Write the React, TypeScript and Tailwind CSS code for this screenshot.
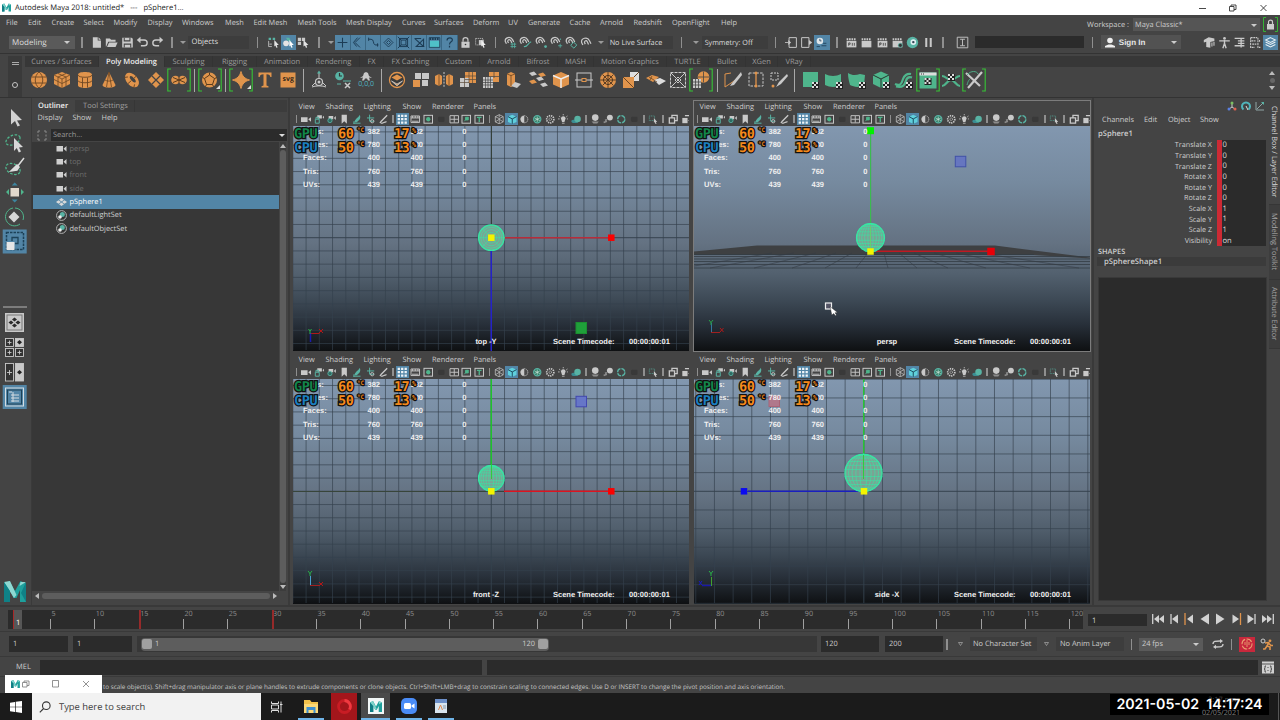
import type { ReactNode } from "react";

const O = "#e0944c";
const G = "#4fb58c";
const W = "#c9c9c9";
const T = "#58b3a4";

const MENUS: [string, string][] = [
  ["File", "w-[22px]"], ["Edit", "w-[23.5px]"], ["Create", "w-[32px]"], ["Select", "w-[30px]"],
  ["Modify", "w-[34px]"], ["Display", "w-[34.5px]"], ["Windows", "w-[43px]"], ["Mesh", "w-[28.5px]"],
  ["Edit Mesh", "w-[44px]"], ["Mesh Tools", "w-[48.5px]"], ["Mesh Display", "w-[56px]"], ["Curves", "w-[32px]"],
  ["Surfaces", "w-[39px]"], ["Deform", "w-[35px]"], ["UV", "w-[20px]"], ["Generate", "w-[41.5px]"],
  ["Cache", "w-[30.5px]"], ["Arnold", "w-[33.5px]"], ["Redshift", "w-[38.5px]"], ["OpenFlight", "w-[49px]"], ["Help", "w-[20px]"],
];

const TABS: [string, string][] = [
  ["Curves / Surfaces", "w-[74px]"], ["Poly Modeling", "w-[66px]"], ["Sculpting", "w-[48px]"], ["Rigging", "w-[44px]"],
  ["Animation", "w-[51px]"], ["Rendering", "w-[52px]"], ["FX", "w-[24px]"], ["FX Caching", "w-[54px]"],
  ["Custom", "w-[42px]"], ["Arnold", "w-[39px]"], ["Bifrost", "w-[39px]"], ["MASH", "w-[36px]"],
  ["Motion Graphics", "w-[73px]"], ["TURTLE", "w-[42px]"], ["Bullet", "w-[37px]"], ["XGen", "w-[32px]"], ["VRay", "w-[33px]"],
];

const checker = (x: number, y: number) => (
  <g>
    <rect x={x} y={y} width="7" height="7" fill="#222" />
    <path d={`M${x} ${y}h2v2h-2zM${x + 4} ${y}h2v2h-2zM${x + 2} ${y + 2}h2v2h-2zM${x} ${y + 4}h2v2h-2zM${x + 4} ${y + 4}h2v2h-2z`} fill="#ddd" />
  </g>
);

// shelf glyphs, 24 x 24
const SHELF: Record<string, ReactNode> = {
  sphere: <><circle cx="12" cy="12" r="8" fill={O} /><path d="M4.500 9h15M4.500 15h15M12 4c-5 4-5 12 0 16M12 4c5 4 5 12 0 16" stroke="#6b4522" fill="none" strokeWidth=".9" /></>,
  cube: <><path d="M12 4l8 3v9l-8 4-8-4V7z" fill={O} /><path d="M4 7l8 4 8-4M12 11v9M4 11.500l8 4 8-4M8 9v9M16 9v9M8 5.500l8 3.500M16 5.500L8 9" stroke="#6b4522" fill="none" strokeWidth=".8" /></>,
  cyl: <><path d="M5 6.500c0-3.300 14-3.300 14 0v11c0 3.300-14 3.300-14 0z" fill={O} /><path d="M5 7c0 3 14 3 14 0M5 12.500c0 3 14 3 14 0M9.500 9.500v10M14.500 9.500v10" stroke="#6b4522" fill="none" strokeWidth=".9" /></>,
  cone: <><path d="M12 4l6.500 13c0 3.500-13 3.500-13 0z" fill={O} /><path d="M12 4l-2.500 15M12 4l2.500 15M8 12c2 1.500 6 1.500 8 0" stroke="#6b4522" fill="none" strokeWidth=".8" /></>,
  torus: <g transform="rotate(48 12 12)"><ellipse cx="12" cy="12" rx="8.500" ry="5.500" fill={O} /><ellipse cx="12" cy="11" rx="4" ry="1.700" fill="#444" /><path d="M12 13v4.500M7 13l-2 3M17 13l2 3M12 6.500v3" stroke="#6b4522" strokeWidth=".9" /></g>,
  plane: <><path d="M12 4l8 8-8 8-8-8z" fill={O} /><path d="M8 8l8 8M16 8l-8 8" stroke="#444" strokeWidth="1.200" /></>,
  soccer: <><circle cx="8.500" cy="12" r="4.300" fill={O} /><circle cx="15.500" cy="12" r="4.300" fill={O} /><path d="M6 9.500l12 5M6 14.500l12-5M12 9v6" stroke="#5a3a1c" strokeWidth="1" /></>,
  disc: <><circle cx="11.500" cy="12" r="7.500" fill={O} /><path d="M11.500 7l5 3.500-2 6h-6l-2-6zM11.500 4.500V7M16.500 10.500l2.500-1M14.500 16.500l1 2M8.500 16.500l-1 2M6.500 10.500l-2-1" stroke="#5a3a1c" fill="none" strokeWidth="1" /><path d="M22 17v4h-4z" fill="#ddd" /></>,
  star: <><path d="M12 3.500c1.500 5 3.500 7 8.500 8.500-5 1.500-7 3.500-8.500 8.500-1.500-5-3.500-7-8.500-8.500 5-1.500 7-3.500 8.500-8.500z" fill={O} stroke={O} /><path d="M22 17v4h-4z" fill="#ddd" /></>,
  type: <path d="M5.500 4.500h13V9h-1.200c-.3-2-1-2.800-3.800-2.800V17.500l2 .8V19.500h-7v-1.200l2-.8V6.200C7.700 6.200 7 7 6.700 9H5.500z" fill={O} />,
  svg: <rect x="4.500" y="4.500" width="15" height="15" fill={O} />,
  joint: <><circle cx="12" cy="14" r="3.500" fill="none" stroke={W} strokeWidth="1.200" /><circle cx="12" cy="14" r="1.500" fill={W} /><path d="M5 19c3-1.500 11-1.500 14 0M12 5v5M5 18l3-3M19 18l-3-3" stroke={W} fill="none" /><path d="M12 2.500l2 3h-4z" fill={T} /></>,
  clock: <><circle cx="8.500" cy="8" r="4.300" fill={T} /><path d="M8.500 5v3h2.500" stroke="#333" fill="none" strokeWidth="1.200" /><path d="M6 16h4M12 13h8" stroke={T} /><path d="M14 15l5 5M19 15l-5 5" stroke={W} strokeWidth="1.500" /></>,
  zero: <><path d="M6 10l3-2 1-3 2-1 2 1 1 3 3 2-3-.5 1 3h-2l-1-2h-2l-1 2H8l1-3z" fill={W} /></>,
  combine: <><circle cx="12" cy="12" r="7.500" fill="#3a3a3a" stroke={O} strokeWidth="1.300" /><path d="M12 6.500l5.500 3-5.500 3-5.500-3z" fill={O} /><path d="M6.500 13l5.500 3 5.500-3-5.500 4.800z" fill={O} stroke={W} strokeWidth=".8" /></>,
  separate: <><path d="M4 12h7v7H4z" fill={O} /><path d="M6 5h6v6H6zM13 5h7v6h-7zM13 12h6v6h-6z" fill={W} /></>,
  mirror: <><path d="M3 8l4-2 3 2v8l-3 2-4-2zM14 8l3-2 4 2v8l-4 2-3-2z" fill={O} /><path d="M12 4v16" stroke={W} strokeDasharray="2 1.200" /><path d="M7 6v12M17 6v12" stroke="#6b4522" strokeWidth=".8" /></>,
  smooth: <><path d="M9 4h11v11H9z" fill={O} /><path d="M4 10h9v9H4z" fill={W} /><path d="M13 4v11M16.500 4v11M9 8h11M9 11.500h11M8.500 10v9M4 14.500h9" stroke="#5a4a3a" strokeWidth=".7" /></>,
  reduce: <><path d="M10 4h10v10H10z" fill={O} /><path d="M4 9h10v11H4z" fill={W} /><path d="M15 4v6M10 8.500h10M6.500 9v11M9 9v11M11.500 9v11M4 12h10M4 14.500h10M4 17h10" stroke="#444" strokeWidth=".7" /></>,
  extrude: <><path d="M5 6l4-2 4 2v11l-4 2-4-2z" fill={O} /><path d="M13 14l6 2-4 4-6-2z" fill={W} /><path d="M9 7v11M5 6l4 1.500L13 6" stroke="#6b4522" fill="none" strokeWidth=".8" /></>,
  bridge: <><path d="M3 5l5-1.500 3 3L6 8zM10 10l5-1.500 3 3-5 1.500zM14 16l5-1.500 3 3-5 1.500z" fill={W} /><path d="M12 6l5-1.500 3 3L15 9zM3 13l5-1.500 3 3L6 16z" fill={O} /></>,
  bevel: <><path d="M12 4l8 3.500v9L12 20l-8-3.500v-9z" fill={O} /><path d="M4 7.500l8 3.500 8-3.500M12 11v9" stroke="#eee" fill="none" strokeWidth="1.500" /></>,
  connect: <><rect x="5" y="5" width="14" height="14" fill="none" stroke={W} /><path d="M3 12h18" stroke={W} /><rect x="10" y="10.500" width="4" height="3" fill="#444" stroke={O} /></>,
  wheel: <><circle cx="12" cy="12" r="8" fill={O} /><circle cx="12" cy="12" r="4.500" fill="none" stroke="#4d3520" /><path d="M12 4v16M4 12h16M6.500 6.500l11 11M17.500 6.500l-11 11" stroke="#4d3520" strokeWidth=".9" /></>,
  fill: <><path d="M11 4h9v9h-9z" fill="#dedede" /><path d="M4 9h11v11H4z" fill={O} /><path d="M4 9l11 11M15 9l5-5" stroke="#6b4522" /></>,
  weld: <><path d="M3 10l6-3 7 2-6 5z" fill={O} /><path d="M11 12l6-2 6 3-7 4z" fill="#ddd" /><path d="M6 9l8 5M9 8l-2 4" stroke="#6b4522" strokeWidth=".8" /></>,
  quad: <><rect x="4.500" y="4.500" width="15" height="15" fill="none" stroke={W} strokeDasharray="3 1" /><path d="M5 5l14 14M19 5L5 19M12 9l3 3-3 3-3-3z" stroke={W} fill="none" /></>,
  ball: <><circle cx="14.500" cy="9" r="5.800" fill={O} /><path d="M4 11h8v9H4z" fill={W} /><path d="M6.500 11v9M9.500 11v9M4 14h8M4 17h8M9 9h11M14.500 3.500v11" stroke="#444" strokeWidth=".8" /></>,
  knife: <><path d="M4 6l6-1M4 6v13l12-8" stroke={O} fill="none" /><path d="M20 4l-9 11-2 3 4-1 8-10z" fill={W} /></>,
  loop: <><rect x="5" y="5" width="14" height="13" fill="none" stroke={W} strokeDasharray="2.500 1.200" /><path d="M12 4v15" stroke={O} strokeWidth="1.300" /><circle cx="12" cy="5" r="1.500" fill={O} /><circle cx="12" cy="18" r="1.500" fill={O} /></>,
  draw: <><rect x="4" y="5" width="7" height="7" fill="none" stroke={W} strokeDasharray="2 1" /><path d="M20 6l-8 8-3 5 5-3 7-8z" fill={W} /><circle cx="6" cy="18" r="1.500" fill={O} /></>,
  uvPlane: <><path d="M4 4h15v15H4z" fill={G} />{checker(13, 14)}</>,
  uvCyl: <><path d="M3 6c5 2.500 11 2.500 16 0v11c-5 2.500-11 2.500-16 0z" fill={G} />{checker(14, 14)}</>,
  uvShape: <><path d="M3 5c5 3 8 2 12 1l5 1-1 10c-5 3-10 2-14 0C4 13 3 10 3 5z" fill={G} />{checker(14, 14)}</>,
  uvCube: <><path d="M12 3.500l8 3.500v9L12 20l-8-4V7z" fill={G} /><path d="M4 7l8 4 8-4M12 11v9" stroke="#28352f" fill="none" />{checker(14, 14)}</>,
  uvCont: <><path d="M3 16c6 3 7-2 8-5s4-6 8-5M4 18.500c8 2 9-3 10-6s3-4 6-3" stroke={G} fill="none" strokeWidth="2.200" />{checker(14, 14)}</>,
  uvEd: <><rect x="3.500" y="4.500" width="17" height="16" fill={G} /><rect x="3.500" y="4.500" width="17" height="3" fill="#ddd" /><path d="M5 6h4" stroke="#333" strokeDasharray="1 1" />{checker(8.500, 10)}</>,
  uvX: <><path d="M3 8c4 0 5 4 9 4s5-4 9-4M3 18c4 0 5-6 9-6s5 6 9 6" stroke={G} fill="none" strokeWidth="2.200" />{checker(9, 6)}</>,
  uvCut: <><path d="M4 5l14 13M20 4L6 20" stroke={W} strokeWidth="2.200" /><path d="M5 7c4-5 10-4 11-1M5 17c1-4 2-5 3-6" fill="none" stroke={G} strokeWidth=".9" /></>,
};

const SHELF_ROW = [
  "sphere", "cube", "cyl", "cone", "torus", "plane", "[soccer", "|", "[disc", "|", "[star", "type", "svg", "|", "joint", "clock", "zero", "|",
  "combine", "separate", "mirror", "smooth", "reduce", "extrude", "bridge", "bevel", "connect", "wheel", "fill", "weld", "quad", "[ball", "|",
  "knife", "loop", "draw", "|", "uvPlane", "uvCyl", "uvShape", "uvCube", "uvCont", "[uvEd", "uvX", "[uvCut",
];

function ShelfIcon({ id }: { id: string }) {
  if (id === "|") return <div className="flex w-[7.8px] justify-center"><div className="h-[23px] w-px bg-[#a9a9a9]" /></div>;
  const boxed = id[0] === "[";
  const key = boxed ? id.slice(1) : id;
  return (
    <div className="relative flex w-[23.4px] justify-center">
      <svg className="h-6 w-6 shrink-0 overflow-visible" viewBox="0 0 24 24">
        {SHELF[key]}
        {boxed && <path d="M4 1H.8v22H4M20 1h3.200v22H20" stroke="#35c435" fill="none" strokeWidth="1.100" />}
      </svg>
      {key === "svg" && <span className="absolute top-[7px] text-[7px] font-bold leading-[9px] text-[#3a2a1a]">svg</span>}
      {key === "zero" && <span className="absolute top-[12px] text-[7px] leading-[9px] text-[#4fb5c4]">0,0,0</span>}
    </div>
  );
}

// small glyphs, 16 x 16
const clap = <><path d="M2 6h12v8H2z" fill={W} /><path d="M2 4h12" stroke={W} strokeWidth="2.200" strokeDasharray="2 1" /></>;
const magnet = <path d="M3 9.500L1.500 6.500c-.5-5 6.500-6.500 9-2l1.500 3M5.500 8.500L4.500 6.500c.5-2.500 2.500-3 4-.5l1 2.500" stroke={W} fill="none" strokeWidth="1.500" />;
const SMALL: Record<string, ReactNode> = {
  file: <><path d="M3.500 1.500h6v4h4v9h-10z" fill={W} /><path d="M10.500 1.500l3 3h-3z" fill={W} /></>,
  open: <><path d="M1 3h5l1.500 1.500H13V7H4l-2.500 6H1z" fill={W} /><path d="M5 8h10.500l-2.500 5.500H2.500z" fill={W} /></>,
  save: <><path d="M1.500 2h11.500l1.500 1.500V14h-13z" fill={W} /><path d="M4 2v4h7V2M4 14v-4h8v4" stroke="#444" fill="none" strokeWidth="1.300" /></>,
  undo: <><path d="M4 5h6c5 0 5 7 0 7H6" stroke={W} fill="none" strokeWidth="1.700" /><path d="M5.500 1v8L1 5z" fill={W} /></>,
  redo: <><path d="M12 5H6c-5 0-5 7 0 7h4" stroke={W} fill="none" strokeWidth="1.700" /><path d="M10.500 1v8L15 5z" fill={W} /></>,
  sel1: <><path d="M2 2h3v3H2zM7 2h3v3H7z" fill={T} /><path d="M2 6v7h4M3 10h3" stroke={W} fill="none" /><path d="M9 5l5.500 6H12l1 3-1.500.6-1.200-3L9 13z" fill="#e4e4e4" /></>,
  sel2: <><circle cx="5" cy="9" r="3.500" fill="#e4e4e4" /><path d="M5 2h4l2 4H7z" fill={T} /><path d="M9 5l5.500 6H12l1 3-1.500.6-1.200-3L9 13z" fill="#fff" /></>,
  sel3: <><path d="M1 2h4v4H1zM6 2h4v4H6zM1 7h4v4H1z" fill={W} /><path d="M8 5l6 6h-2.500l1 3-1.500.6-1.200-3L8 13z" fill="#e4e4e4" /></>,
  plus: <path d="M8 2v12M2 8h12" stroke="#1c3c55" strokeWidth="1.300" />,
  ang: <path d="M11 2L5 8l6 6M8 2L3 8l4 5" stroke="#1c3c55" fill="none" strokeWidth="1.200" />,
  curve: <path d="M2 4h3c4 0 2 6 5 7h4M2 2v4M13 9v4" stroke="#1c3c55" fill="none" strokeWidth="1.200" />,
  dia: <path d="M8 2.500L13.500 8 8 13.500 2.500 8zM8 5.500L10.500 8 8 10.500 5.500 8z" stroke="#1c3c55" fill="none" strokeWidth="1.100" />,
  lat: <path d="M3 3h10v10H3zM5 5h6v6H5zM1 1l4 4M15 1l-4 4M1 15l4-4M15 15l-4-4" stroke="#1c3c55" fill="none" strokeWidth="1.200" />,
  spi: <path d="M2 3h8M2 3l11 10H4l9-9v9" stroke="#1c3c55" fill="none" strokeWidth="1.300" />,
  film: <><path d="M2 6h12v8H2z" fill="#4fc0c8" /><path d="M2 3.500h12" stroke="#1c3c55" strokeWidth="3" strokeDasharray="2 1" /><path d="M1.500 2h13v12h-13z" stroke="#1c3c55" fill="none" /></>,
  q: <path d="M5 5.500c0-4 7-4 6.500-.5C11.500 7.500 8 7 8 10.500M8 12v2" stroke="#1c3c55" fill="none" strokeWidth="1.500" />,
  lock: <><path d="M3 7h10v7.500H3z" fill={W} /><path d="M5 7V4.500c0-3.500 6-3.500 6 0V7" stroke={W} fill="none" strokeWidth="1.500" /><circle cx="8" cy="10.500" r="1" fill="#333" /></>,
  selp: <><rect x="2" y="3" width="9" height="8" fill="none" stroke={W} strokeDasharray="1.500 1" /><path d="M6 5h6v6H6z" fill={W} /><path d="M9 5l5.500 6H12l1 3-1.500.6-1.200-3L9 13z" fill="#eee" /></>,
  mag1: <>{magnet}<path d="M8 10h7M8 13h7M10 8v7M13 8v7" stroke={T} /></>,
  mag2: <>{magnet}<path d="M6 13c5 1 4-4 9-6" stroke={T} fill="none" strokeWidth="1.300" /></>,
  mag3: <>{magnet}<circle cx="13" cy="13" r="1.700" fill={T} /></>,
  mag4: <>{magnet}<path d="M10 12h5M12.500 9.500v5M13 3v2" stroke={T} /></>,
  mag5: <>{magnet}<path d="M10.500 7.500l4 3.500-3.500 4-4-3.500z" stroke={T} fill="none" strokeWidth="1.200" /></>,
  mag6: <path d="M3.500 11L2 8c-1-5 7-8 9.500-2.500l2 4M6.500 10L5.500 8c0-2.500 2.500-3 3.500-1l1.500 3.500" stroke={W} fill="none" strokeWidth="1.500" />,
  in: <><path d="M5 2h9v12H5z" stroke={W} fill="none" strokeWidth="1.200" /><path d="M0 8h4" stroke={W} /><path d="M4 5l3.500 3L4 11z" fill={W} /></>,
  out: <><path d="M2 2h9v12H2z" stroke={W} fill="none" strokeWidth="1.200" /><path d="M11 5l4 3-4 3z" fill={W} /></>,
  hist: <><circle cx="6" cy="6" r="4" fill="#dfe6ea" /><path d="M6 3.500V6h2M8 12h6M10 9h4M2 13h4" stroke="#1c3c55" fill="none" /></>,
  clap: clap,
  clapr: <>{clap}<path d="M4.500 12V8.500h1.800v1.700H4.500M9 8.500v3.500M11.500 8.500v3.500" stroke="#444" fill="none" /></>,
  clapg: <>{clap}<circle cx="11.500" cy="11.500" r="2.500" fill="#333" stroke={T} /></>,
  orb: <><circle cx="8" cy="8" r="7" fill={T} /><circle cx="9" cy="7.500" r="3.500" fill="#dfeef0" /><circle cx="9" cy="7.500" r="1.500" fill="#345" /></>,
  pause: <path d="M4 2.500h2.500v11H4zM9.500 2.500H12v11H9.500z" fill={W} />,
  ibeam: <path d="M1.500 1.500h13v13h-13zM5 4h6M8 4v8M5 12h6" stroke={W} fill="none" strokeWidth="1.100" />,
  mt1: <><path d="M1 5l6-3.500 7 1.500v3l-5 1.500v7l-5-1V7L1 8z" fill={W} /><path d="M11 8v5M13.500 7v5" stroke={W} strokeWidth="1.300" /></>,
  man: <><circle cx="8" cy="3" r="1.700" fill={W} /><path d="M1.500 6h13M8 5v5M8 9l-2 6M8 9l2 6" stroke={W} strokeWidth="1.700" /></>,
  ae: <path d="M2 3h12M6 6h8M6 9h8M2 12h12M10 2v12" stroke={W} strokeWidth="1.600" />,
  ts: <path d="M2 2h8M2 2v12h5M11 2v12h3M3 6h5M4 10h5M13 5v2" stroke={W} fill="none" strokeWidth="1.300" strokeDasharray="2.500 .8" />,
  layers: <path d="M8 2l6 3-6 3-6-3zM2 7.500l6 3 6-3M2 10.500l6 3 6-3" stroke="#e8f0f4" fill="none" strokeWidth="1.300" />,
  // viewport toolbar
  cam: <path d="M0 5h10v7H0zM11 8l5-3.500v8z" fill={W} />,
  cam2: <><path d="M5 2h7v5H5zM13 5l3-3v6z" fill={W} /><path d="M2 8h6v6H2zM3 8V5h4v3" stroke={T} fill="none" strokeWidth="1.500" /></>,
  cam3: <><path d="M4 3h7v5H4zM12 6l3-3v6z" fill={W} /><circle cx="6" cy="10" r="3.200" fill="#2e6b62" stroke={T} strokeWidth="1.300" /></>,
  book: <path d="M4 1h8v14l-4-4-4 4z" fill={W} />,
  feather: <><path d="M12 1c2 6-1 9-6 12l-2-1c0-4 5-6 8-11z" fill={T} /><path d="M2 14h11M3 11v4" stroke={T} strokeWidth="1.500" /></>,
  pan: <><path d="M7 1v10M3 6h11M7 11h7" stroke={T} strokeWidth="1.500" /><circle cx="11" cy="11" r="2.500" fill="none" stroke={W} strokeWidth="1.300" /></>,
  pen: <path d="M14 2L5 11l-2 3M5 14c3 1 5-3 8-2" stroke={W} fill="none" strokeWidth="2" />,
  grid: <path d="M1 1h3.500v3.500H1zM6.200 1h3.500v3.500H6.200zM11.500 1H15v3.500h-3.500zM1 6.200h3.500v3.500H1zM6.200 6.200h3.500v3.500H6.200zM11.500 6.200H15v3.500h-3.500zM1 11.500h3.500V15H1zM6.200 11.500h3.500V15H6.200zM11.500 11.500H15V15h-3.500z" fill="#eef4f8" />,
  gate: <path d="M1.500 3h13v10h-13zM1.500 6h13M4 3v3M8 3v3M12 3v3M3 11h10" stroke={W} fill="none" strokeWidth="1.400" />,
  res: <><rect x="1.500" y="2" width="13" height="12" fill="none" stroke={W} strokeWidth="1.500" /><circle cx="8" cy="8" r="3.300" fill={G} /></>,
  dim: <rect x="3" y="4" width="10" height="8" rx="2" fill="#393939" />,
  field: <path d="M1.500 2.500h13v11h-13zM8 3v10M2 8h12" stroke={W} fill="none" strokeWidth="1.400" />,
  safe: <><rect x="1.500" y="2" width="13" height="12" fill="none" stroke={W} strokeWidth="1.500" /><path d="M5 11l6-6M11 5H7v4h4z" stroke={G} fill={G} strokeWidth="1.500" /></>,
  tt: <><rect x="1.500" y="2" width="13" height="12" fill="none" stroke={W} strokeWidth="1.500" /><path d="M4.500 5h7M8 5v7" stroke={G} strokeWidth="2" /></>,
  wire: <path d="M8 1l6 3v8l-6 3-6-3V4zM2 4l6 3 6-3M8 7v8M8 1v4M2 12l6-4 6 4" stroke={W} fill="none" strokeWidth="1.100" />,
  shade: <><path d="M8 1l6.500 3v8L8 15l-6.500-3V4z" fill="#5fd0dc" /><path d="M1.500 4L8 7.500 14.500 4M8 7.500V15" stroke="#1c4c60" fill="none" strokeWidth="1.500" /></>,
  half: <><circle cx="8" cy="8" r="5.500" fill={W} /><path d="M8 2.500a5.500 5.500 0 010 11z" fill="#4a4a4a" /><circle cx="8" cy="8" r="5.500" fill="none" stroke={W} strokeDasharray="1.500 1" /></>,
  tex: <><circle cx="8" cy="8" r="5.500" fill="#2e7b62" stroke={T} strokeWidth="1.800" /><path d="M8 4v8M4 6l8 4M4 10l8-4" stroke="#d0e6de" /></>,
  chk: <><circle cx="8" cy="8" r="5.500" fill="none" stroke={W} strokeWidth="2.500" strokeDasharray="2 1.300" /><circle cx="8" cy="8" r="2" fill="none" stroke={W} strokeWidth="1.500" strokeDasharray="1.500 1" /></>,
  bulb: <><path d="M4.500 7c0-5 7-5 7 0L9.800 12H6.200z" fill={W} /><path d="M6 14h4M1.500 3l2 1.500M14.500 3l-2 1.500M0 7.500h2.500M13.500 7.500H16M8 0v2" stroke={W} strokeWidth="1.200" /></>,
  shad: <><ellipse cx="6" cy="11" rx="5.500" ry="2.800" fill="#3b8d92" /><circle cx="10" cy="7.500" r="5" fill={T} /></>,
  ao: <><circle cx="8" cy="5.500" r="5" fill={W} /><path d="M2.500 11.500h11l-2.500 3H5z" fill="#8d8d8d" /></>,
  blur: <><circle cx="10.500" cy="5.500" r="4.500" fill={W} /><path d="M1 13l5-2M3 9.500l3-1" stroke="#8d8d8d" strokeWidth="2.200" /></>,
  aa: <circle cx="8" cy="8" r="5.500" fill="none" stroke={T} strokeWidth="2" strokeDasharray="7 1.500" />,
  iso: <><rect x="2" y="3" width="8" height="7" fill="none" stroke={T} strokeDasharray="1.500 1" /><path d="M9 6l5 6h-2l1 3-1.500.4-1-3L9 13z" fill={W} /></>,
  ex1: <path d="M2 6h8v8H2zM6 6V2h8v8h-4" stroke={W} fill="none" strokeWidth="2" />,
  ex2: <><path d="M2 6h8v8H2z" fill={W} /><path d="M6 2.500h8V10h-2.500" stroke={W} fill="none" strokeWidth="1.600" /></>,
};

function Small({ id, w = "w-[15.3px]", hl = false }: { id: string; w?: string; hl?: boolean }) {
  return (
    <div className={`flex h-[15px] shrink-0 items-center justify-center ${w} ${hl ? "bg-[#5285a6]" : ""}`}>
      <svg className="h-[13px] w-[13px]" viewBox="0 0 16 16">{SMALL[id]}</svg>
    </div>
  );
}

const Sep = ({ w = "w-[15px]", h = "h-[11px]" }: { w?: string; h?: string }) => (
  <div className={`flex shrink-0 justify-center ${w}`}><div className={`w-[1.500px] bg-[#8f8f8f] ${h}`} /></div>
);

const Tri = ({ w = "w-[8px]", color = "border-t-[#9a9a9a]" }: { w?: string; color?: string }) => (
  <div className={`flex shrink-0 justify-center ${w}`}>
    <div className={`border-x-[3px] border-t-[3.500px] border-x-transparent ${color}`} />
  </div>
);

const Dots = ({ className = "" }: { className?: string }) => (
  <div className={`shrink-0 bg-[radial-gradient(#777_0.6px,transparent_0.7px)] bg-[length:2px_2px] ${className}`} />
);

function MayaM({ className }: { className: string }) {
  return (
    <svg className={className} viewBox="0 0 22 20">
      <path d="M0 2.500L5.500 0 11 10 16.500 0 22 2.500V20h-6V9l-3.500 7h-3L6 9v11H0z" fill="#1fa09c" />
      <path d="M0 2.500L5.500 0 12 14l-2.500 2L0 2.500zM22 2.500L16.500 0v6z" fill="#7ed3cb" />
      <path d="M0 2.500L6 9v11H0z" fill="#0e7d84" />
    </svg>
  );
}

function StatusLine() {
  return (
    <div className="flex h-[22px] items-center">
      <Dots className="ml-[2px] h-4 w-1" />
      <div className="ml-[3px] flex h-[13px] w-[66px] items-center bg-[#5a5a5a] pl-[3px] pt-px text-[8px]">
        <span className="w-[50px] text-[#ddd]">Modeling</span>
        <Tri w="w-[10px]" color="border-t-[#ccc]" />
      </div>
      <Sep w="w-[14px]" />
      {["file", "open", "save", "undo", "redo"].map((i) => <Small key={i} id={i} />)}
      <Sep w="w-[13px]" />
      <Tri w="w-[10px]" />
      <div className="flex h-[13px] w-[61px] items-center bg-[#3d3d3d] pl-[3px] pt-[2px] text-[7.600px] text-[#ddd]">Objects</div>
      <Sep w="w-[16px]" />
      <Small id="sel1" /><Small id="sel2" hl /><Small id="sel3" />
      <Sep w="w-[15px]" />
      <Tri w="w-[9px]" />
      {["plus", "ang", "curve", "dia", "lat", "spi", "film", "q"].map((i) => (
        <div key={i} className="flex border-r border-[#3a6784]"><Small id={i} hl w="w-[14.300px]" /></div>
      ))}
      <Small id="lock" /><Small id="selp" />
      <Sep w="w-[14.500px]" />
      {["mag1", "mag2", "mag3", "mag4", "mag5", "mag6"].map((i) => <Small key={i} id={i} />)}
      <Tri w="w-[13px]" />
      <div className="flex h-[13px] w-[65px] items-center whitespace-nowrap bg-[#3d3d3d] pl-[2px] pt-[2px] text-[7.300px] text-[#ddd]">No Live Surface</div>
      <Sep w="w-[18px]" />
      <Tri w="w-[11px]" />
      <div className="flex h-[13px] w-[66px] items-center bg-[#3d3d3d] pl-[3px] pt-[2px] text-[7.200px] text-[#ddd]">Symmetry: Off</div>
      <Sep w="w-[16px]" />
      <Small id="in" /><Small id="out" /><Small id="hist" hl />
      <Sep w="w-[14.500px]" />
      {["clapr", "clap", "clapr", "clapg", "orb", "pause"].map((i, n) => <Small key={n} id={i} />)}
      <Sep w="w-[14px]" />
      <Small id="ibeam" w="w-[25px]" />
      <div className="h-[12px] w-[109px] bg-[#2b2b2b]" />
      <Sep w="w-[17px]" />
      <div className="flex h-[14px] w-[80px] items-center bg-[#525252] font-['Liberation_Sans'] text-[8px] font-bold text-[#e6e6e6]">
        <svg className="mx-[4px] h-[11px] w-[10px]" viewBox="0 0 10 11"><circle cx="5" cy="3.500" r="2.800" fill="#eee" /><path d="M0 10.500h10V9L6.500 7.500h-3L0 9z" fill="#eee" /></svg>
        <span className="w-[51px] pt-px">Sign In</span>
        <Tri color="border-t-[#ccc]" />
      </div>
      <div className="ml-auto flex pr-[2px]">
        <Small id="mt1" /><Small id="man" /><Small id="ae" /><Small id="ts" /><Small id="layers" hl />
      </div>
    </div>
  );
}

function Shelf() {
  return (
    <div className="flex h-[45px] border-y border-[#333] pt-[2px]">
      <Dots className="mx-[2px] h-[40px] w-[4px]" />
      <div className="flex w-[14px] flex-col items-center justify-between bg-[#3a3a3a] pb-[9px] pt-[6px]">
        <div className="h-[3px] w-[7px] border-y border-[#aaa]" />
        <div className="h-[6px] w-[6px] rounded-full border-[1.500px] border-[#c5c5c5]" />
      </div>
      <div className="ml-[3px] flex grow flex-col">
        <div className="flex h-[11px] bg-[#373737] text-[7.500px] leading-[12px]">
          {TABS.map(([t, w], i) => (
            <div key={t} className={`${w} shrink-0 whitespace-nowrap border-r border-[#333] text-center ${i === 1 ? "bg-[#444] font-semibold text-[#eee]" : "text-[#9c9c9c]"}`}>{t}</div>
          ))}
        </div>
        <div className="ml-[2px] flex h-[26px] items-center">
          {SHELF_ROW.map((id, i) => <ShelfIcon key={i} id={id} />)}
          <div className="ml-auto mr-[5px] flex flex-col items-center gap-[3px]">
            <div className="border-x-[3px] border-b-[4px] border-x-transparent border-b-[#bbb]" />
            <div className="h-[5px] w-[5px] rounded-full bg-[#666]" />
            <div className="border-x-[3px] border-t-[4px] border-x-transparent border-t-[#bbb]" />
          </div>
        </div>
      </div>
    </div>
  );
}

function ToolBox() {
  return (
    <div className="flex w-8 shrink-0 flex-col items-start border-r border-[#3a3a3a]">
      <Dots className="mt-[2px] h-[4px] w-[27px]" />
      <svg className="h-[502px] w-[30px] shrink-0" viewBox="0 104 30 502">
        <path d="M11 109l11 11-5 .5 3 5-2.500 1-2.500-5.500-4 3.500z" fill="#d2d2d2" />
        <ellipse cx="13" cy="140" rx="7.500" ry="4.500" transform="rotate(-25 13 140)" stroke={G} fill="none" strokeWidth="1.300" strokeDasharray="2.500 1.500" />
        <path d="M14 138l9 9-4 .5 2 4-2.200 1-2-4.500-2.800 3z" fill="#d8d8d8" />
        <ellipse cx="13" cy="169" rx="7.500" ry="5" transform="rotate(25 13 169)" stroke={G} fill="none" strokeWidth="1.300" strokeDasharray="2.500 1.500" />
        <path d="M24 158l-7 9M17 165l-6 6 6-1 2-3z" stroke="#ddd" fill="#ddd" strokeWidth="1.500" />
        <rect x="10.500" y="188" width="8.500" height="8.500" fill="#e2d8cc" />
        <path d="M14.700 182.500l3 3h-6zM14.700 202.500l3-3h-6z" fill="#3d86a0" /><path d="M6 192l3-3v6zM24 192l-3-3v6z" fill={G} />
        <path d="M14 211.500l5.500 5.500-5.500 5.500L8.500 217z" fill="#d8d8d8" />
        <path d="M15 208a9 9 0 018 12M20 224a9 9 0 11-7-16" stroke={G} fill="none" />
        <rect x="2.700" y="229.500" width="24" height="24" fill="#5285a6" />
        <rect x="6.500" y="232.500" width="17" height="17" fill="none" stroke="#1d4258" strokeWidth="1.500" strokeDasharray="2.500 1" />
        <path d="M12 241v-3.500h6v6h-3" stroke="#1d4258" fill="none" strokeWidth="1.300" />
        <rect x="6.500" y="242" width="8" height="8" fill="#e6e6e6" />
        <path d="M3 307h24" stroke="#b5b5b5" />
        <rect x="5" y="313" width="19" height="19" fill="#c8c8c8" /><rect x="7" y="315" width="15" height="15" fill="none" stroke="#777" />
        <path d="M14.500 317.500l2.500 2-2.500 2-2.500-2zM14.500 323.500l2.500 2-2.500 2-2.500-2zM11 320.500l2.500 2-2.500 2-2.500-2zM18 320.500l2.500 2-2.500 2-2.500-2z" fill="#2a2a2a" />
        <g fill="#333" stroke="#c8c8c8" strokeWidth=".9">
          <rect x="5.500" y="338.500" width="8" height="8" /><rect x="15.500" y="338.500" width="8" height="8" fill="#c8c8c8" />
          <rect x="5.500" y="348.500" width="8" height="8" /><rect x="15.500" y="348.500" width="8" height="8" />
          <rect x="5.500" y="363.500" width="8" height="17.500" /><rect x="15.500" y="363.500" width="8" height="17.500" fill="#c8c8c8" />
          <path d="M9.500 340.500v4M7.500 342.500h4M9.500 350.500v4M7.500 352.500h4M19.500 350.500v4M17.500 352.500h4M9.500 370v5M7 372.500h5" />
        </g>
        <path d="M19.500 340l2.500 2.200-2.500 2.200-2.500-2.200zM19.500 370l2.500 2.200-2.500 2.200-2.500-2.200z" fill="#222" />
        <rect x="2.700" y="385" width="24" height="24" fill="#5285a6" />
        <rect x="5.500" y="388" width="18" height="18" fill="none" stroke="#d5dde2" /><rect x="7.500" y="390" width="14" height="14" fill="none" stroke="#1d4258" />
        <path d="M9 392h3M11 395h8M11 398h8M11 401h8M13 392v10" stroke="#d5dde2" />
        <g transform="translate(4 581)">
          <path d="M0 2.500L5.500 0 11 10 16.500 0 22 2.500V21h-6V9l-3.500 8h-3L6 9v12H0z" fill="#1fa09c" />
          <path d="M0 1L6 0l6.500 14-2.500 3L0 1zM22 1l-5.500 0-1 4z" fill="#8fd8d2" />
          <path d="M0 1l6 9v11H0z" fill="#0f8187" /><path d="M22 1v20l-5-9z" fill="#0f8187" />
        </g>
      </svg>
    </div>
  );
}

const NODES = ["persp", "top", "front", "side", "pSphere1", "defaultLightSet", "defaultObjectSet"];

function NodeIcon({ i }: { i: number }) {
  if (i < 4) return <svg className="h-[8px] w-[11px]" viewBox="0 0 11 8"><path d="M.5 1h6.500v5.500H.5zM7.500 3.700l3-2.700v5.500z" fill="#cfcfcf" /></svg>;
  if (i === 4) return <svg className="h-[8px] w-[11px]" viewBox="0 0 11 8"><path d="M5.500 0l2.500 1.800-2.500 1.700L3 1.800zM5.500 4.500L8 6.200 5.500 8 3 6.200zM2.500 2.300L5 4 2.500 5.800 0 4zM8.500 2.300L11 4 8.500 5.800 6 4z" fill="#d9d9d9" /></svg>;
  return <svg className="h-[11px] w-[11px]" viewBox="0 0 11 11"><circle cx="5.500" cy="5.500" r="4.900" stroke="#b5b5b5" fill="#333" /><circle cx="6.300" cy="4.500" r="2.500" fill={T} /><circle cx="4" cy="7" r="1.800" fill="#eee" /></svg>;
}

function Outliner() {
  return (
    <div className="flex w-[258px] shrink-0 flex-col border-r-2 border-[#3a3a3a] pr-[1px]">
      <div className="mt-[2px] flex h-[12px] bg-[#3c3c3c] text-[7.500px] leading-[13px]">
        <div className="w-[43px] bg-[#444] pl-[6px] font-semibold text-[#eee]">Outliner</div>
        <div className="w-[60px] border-r border-[#363636] pl-[8px] text-[#a0a0a0]">Tool Settings</div>
      </div>
      <div className="flex h-[13px] items-center pl-[5.500px] text-[7.400px]">
        <span className="w-[35px]">Display</span><span className="w-[29px]">Show</span><span>Help</span>
      </div>
      <div className="mt-[4px] flex h-[12px] items-center">
        <svg className="ml-[5px] mr-[4px] h-[11px] w-[10px]" viewBox="0 0 10 11"><path d="M1 3V1h2M7 1h2v2M1 8v2h2M7 10h2V8M1 4.500v2M9 4.500v2" stroke="#8a8a8a" fill="none" /></svg>
        <div className="flex h-[12px] grow items-center justify-between bg-[#2b2b2b] pl-[2px] pr-[2px] pt-px text-[7.400px] text-[#999]">Search...<Tri w="w-[7px]" color="border-t-[#ddd]" /></div>
      </div>
      <div className="mt-[1px] flex h-[449px]">
        <div className="w-[247px] bg-[#373737]">
          {NODES.map((n, i) => (
            <div key={n} className={`ml-[1px] flex h-[13.350px] items-center pl-[23px] text-[7.400px] ${i < 4 ? "text-[#6c6c6c]" : i === 4 ? "bg-[#5285a6] text-white" : "text-[#cfcfcf]"}`}>
              <NodeIcon i={i} /><span className="ml-[2.500px] pt-px">{n}</span>
            </div>
          ))}
        </div>
        <div className="ml-[1px] flex w-[6px] flex-col items-center justify-between bg-[#3c3c3c] py-[2px]">
          <div className="border-x-[3px] border-b-[4px] border-x-transparent border-b-[#bbb]" />
          <div className="my-[2px] w-[6px] grow rounded-sm bg-[#5d5d5d]" />
          <div className="border-x-[3px] border-t-[4px] border-x-transparent border-t-[#bbb]" />
        </div>
      </div>
      <div className="mt-[1px] flex h-[7px] items-center pl-[3px]">
        <div className="border-y-[3px] border-r-[4px] border-y-transparent border-r-[#bbb]" />
        <div className="mx-[3px] h-[6px] w-[228px] rounded-sm bg-[#5d5d5d]" />
        <div className="border-y-[3px] border-l-[4px] border-y-transparent border-l-[#bbb]" />
      </div>
      <Dots className="ml-[85px] mt-[1px] h-[3px] w-[85px]" />
    </div>
  );
}

const BAR = [
  "|", "cam", "cam2", "cam3", "book", "feather", "pan", "pen", "|", "*grid", "gate", "res", "dim", "field", "safe", "tt", "|",
  "wire", "*shade", "half", "tex", "chk", "bulb", "shad", "|", "ao", "blur", "aa", "dim", "|", "iso", "|", "ex1", "ex2",
];

function Grid({ cx, cy, step }: { cx: number; cy: number; step: number }) {
  const ks = Array.from({ length: 41 }, (_, i) => i - 20);
  return (
    <g stroke="#35414d" strokeOpacity=".78">
      {ks.map((k) => <path key={k} d={`M${cx + k * step} 0v224M0 ${cy + k * step}h396`} strokeWidth={k === 0 ? 1.2 : 0.85} />)}
    </g>
  );
}

function Sphere({ cx, cy, r, rings = false }: { cx: number; cy: number; r: number; rings?: boolean }) {
  const s = [0.18, 0.4, 0.6, 0.78, 0.92];
  return (
    <g fill="none" stroke="#38e6a4" strokeWidth=".6">
      <circle cx={cx} cy={cy} r={r - 0.6} fill="#7ba394" strokeWidth="1.200" />
      {rings
        ? s.map((k) => <circle key={k} cx={cx} cy={cy} r={r * k} />)
        : s.map((k) => (
            <g key={k}>
              <ellipse cx={cx} cy={cy} rx={r * k} ry={r - 0.5} />
              <path d={`M${cx - r * Math.sqrt(1 - k * k)} ${cy - r * k}h${2 * r * Math.sqrt(1 - k * k)}M${cx - r * Math.sqrt(1 - k * k)} ${cy + r * k}h${2 * r * Math.sqrt(1 - k * k)}`} />
            </g>
          ))}
      {rings && <path d={`M${cx - r} ${cy}h${2 * r}M${cx - r * 0.7} ${cy - r * 0.7}l${r * 1.4} ${r * 1.4}M${cx + r * 0.7} ${cy - r * 0.7}l${-r * 1.4} ${r * 1.4}`} />}
    </g>
  );
}

const Sq = ({ x, y, c, s = 6.5 }: { x: number; y: number; c: string; s?: number }) => <rect x={x - s / 2} y={y - s / 2} width={s} height={s} fill={c} />;

const SCENES: Record<string, ReactNode> = {
  "top -Y": (
    <>
      <Grid cx={198.3} cy={111.7} step={13.23} />
      <rect x="198" y="0" width="1" height="100" fill="#34403a" />
      <rect x="211" y="111" width="105" height="1.500" fill="#b82c3a" />
      <rect x="197.500" y="112" width="1.500" height="113" fill="#2522c8" />
      <Sphere cx={198.3} cy={111.7} r={13.4} rings />
      <Sq x={198.3} y={111.7} c="#f4f400" /><Sq x={318.3} y={111.7} c="#fb0000" />
      <rect x="283" y="196.500" width="10.500" height="11" fill="#1fa03a" stroke="#1c8f31" />
      <path d="M17.500 207.500h9" stroke="#b01818" /><path d="M17.500 207v9" stroke="#1a1ab0" strokeWidth="1.500" /><path d="M15.500 203l1.500 2 1.500-2M17 205v3" stroke="#28b048" fill="none" /><path d="M26 203l4 4M30 203l-4 4" stroke="#b01818" />
    </>
  ),
  persp: (
    <>
      <path d="M0 125.500L63 119.500h238l95 12v1L340 129H0z" fill="#3e4042" />
      <g stroke="#343c44" fill="none" strokeWidth=".8">
        <path d="M0 128.500h340M0 130.500h396M0 133h396M0 135.500h396M0 138.500h396M0 142h396" />
        <path d="M174 127l-12 15M190 127l4 15M205 127l18 15M220 127l34 15M240 127l52 15M262 127l74 15M285 127l100 15M158 127l-27 15M142 127l-44 15M122 127l-62 15M100 127l-84 15M78 127l-78 13" strokeOpacity=".7" />
      </g>
      <rect x="176" y="5" width="1.200" height="108" fill="#3cba50" />
      <rect x="180" y="124.500" width="115" height="1.500" fill="#c01822" />
      <Sphere cx={176.5} cy={111.7} r={14.6} />
      <path d="M176.500 100v24" stroke="#62d070" />
      <Sq x={176.5} y={125.5} c="#f4f400" /><Sq x={297} y={125.5} c="#e80008" s={7.5} /><Sq x={176.5} y={4.7} c="#00f000" s={7} />
      <rect x="261.300" y="30.300" width="10.500" height="10.500" fill="#6676c0" stroke="#4152a8" />
      <path d="M17.500 207v-10" stroke="#3377a0" /><path d="M17 206.500h9" stroke="#a02020" /><path d="M15 194l2 2.500 2-2.500M17 196v3" stroke="#28a048" fill="none" /><path d="M26 202l3.500 4M29.500 202l-3.500 4" stroke="#b01818" />
      <rect x="131.500" y="177" width="6" height="6" fill="#556" stroke="#eee" strokeWidth="1.200" /><path d="M136 180.500l7.500 6-2.500.3 1.500 2.200-1.200.8-1.500-2.300-2 1.500z" fill="#fff" stroke="#222" strokeWidth=".4" />
    </>
  ),
  "front -Z": (
    <>
      <Grid cx={198.3} cy={112.3} step={13.23} />
      <rect x="0" y="112" width="396" height="1" fill="#38453a" />
      <rect x="197.500" y="0" width="1.500" height="88" fill="#1fc22c" />
      <rect x="211" y="111.500" width="105" height="1.500" fill="#dc1420" />
      <Sphere cx={198.3} cy={99.3} r={13.4} />
      <path d="M198.500 86v14" stroke="#2fce3c" />
      <Sq x={198.3} y={112.3} c="#f4f400" /><Sq x={318.3} y={112.3} c="#fb0000" />
      <rect x="283" y="17.300" width="10.500" height="10.500" fill="#6676c8" stroke="#4248b0" />
      <path d="M17.500 207v-10" stroke="#4aa0d0" /><path d="M17 206.500h9" stroke="#a02020" /><path d="M15 192l2 2.500 2-2.500M17 194v3" stroke="#28b048" fill="none" /><path d="M26 203l4 4M30 203l-4 4" stroke="#b01818" />
    </>
  ),
  "side -X": (
    <>
      <Grid cx={169.8} cy={112.3} step={18.67} />
      <rect x="169" y="0" width="1.500" height="76" fill="#28c434" />
      <rect x="54" y="111.500" width="110" height="1.500" fill="#1a1fc0" />
      <Sphere cx={169.5} cy={94} r={19.2} />
      <path d="M169.500 76v24" stroke="#2fce3c" />
      <Sq x={170} y={112.3} c="#f4f400" /><Sq x={50} y={112.3} c="#0a0af0" />
      <rect x="75" y="17" width="10.500" height="10.500" fill="#b0788c" stroke="#a86478" />
      <path d="M17.500 207v-9" stroke="#40a030" /><path d="M17 206.500H8" stroke="#1818a8" strokeWidth="1.500" /><path d="M15 192l2 2.500 2-2.500M17 194v3" stroke="#28b048" fill="none" /><path d="M5 202l3 4M8 202l-3 4" stroke="#1818c8" />
    </>
  ),
};

const POLY: [string, string][] = [["Verts:", "382"], ["Edges:", "780"], ["Faces:", "400"], ["Tris:", "760"], ["UVs:", "439"]];
const OSD = "[-webkit-text-stroke:2.500px_#101010] [paint-order:stroke_fill]";

function Viewport({ name, active = false }: { name: string; active?: boolean }) {
  return (
    <div className={`flex h-[252px] w-[398px] flex-col border ${active ? "border-[#7c7c7c]" : "border-transparent"}`}>
      <div className="flex h-[12px] items-center pl-[5.500px] pt-[2px] text-[7.400px]">
        <span className="w-[27px]">View</span><span className="w-[38px]">Shading</span><span className="w-[39px]">Lighting</span>
        <span className="w-[29.500px]">Show</span><span className="w-[41.500px]">Renderer</span><span>Panels</span>
      </div>
      <div className="mb-px flex h-[12px] items-center overflow-hidden">
        {BAR.map((id, i) =>
          id === "|" ? <Sep key={i} w="w-[6.600px]" h="h-[8px]" /> : (
            <div key={i} className={`flex h-[12px] w-[12.850px] shrink-0 items-center justify-center ${id[0] === "*" ? "bg-[#5285a6]" : ""}`}>
              <svg className="h-[10.500px] w-[10.500px]" viewBox="0 0 16 16">{SMALL[id.replace("*", "")]}</svg>
            </div>
          ),
        )}
      </div>
      <div className="relative h-[225px] overflow-hidden bg-[linear-gradient(#8297af_0%,#768a9f_25%,#647282_52%,#52606e_66%,#3c4854_78%,#28303a_88%,#0e1012_100%)] font-['Liberation_Sans'] text-[7.500px] font-bold text-[#f0f0f0]">
        <svg className="absolute left-0 top-0 h-[225px] w-[396px]" viewBox="0 0 396 225">{SCENES[name]}</svg>
        <div className="absolute left-[10px] top-[-1.500px] w-[164px]">
          {POLY.map(([l, v]) => (
            <div key={l} className="flex h-[13.350px] items-center">
              <span className="w-[37px]">{l}</span><span className="w-[40px] text-right">{v}</span>
              <span className="w-[43px] text-right">{v}</span><span className="w-[43.500px] text-right">0</span>
            </div>
          ))}
        </div>
        <span className="absolute left-[163px] top-[211px] w-[60px] text-center leading-[10px]">{name}</span>
        <span className="absolute left-[260px] top-[211px] leading-[10px]">Scene Timecode:</span>
        <span className="absolute left-[336px] top-[211px] leading-[10px]">00:00:00:01</span>
        {[["GPU", "60", "17", "text-[#12854a]"], ["CPU", "50", "13", "text-[#1b7fc0]"]].map(([l, a, b, c], i) => (
          <div key={l} className={`absolute left-[1px] flex h-[14px] items-center font-['DejaVu_Sans_Mono'] text-[13.500px] text-[#f58a1c] ${OSD} ${i ? "top-[15px]" : "top-px"}`}>
            <span className={`w-[44px] tracking-[-.4px] ${c}`}>{l}</span><span className="w-[19px] tracking-[-.5px]">{a}</span>
            <span className="w-[37px] self-start text-[6px] leading-[8px]">°C</span><span className="w-[18px] tracking-[-.7px]">{b}</span>
            <span className="self-start text-[7px] leading-[8px]">%</span>
          </div>
        ))}
      </div>
    </div>
  );
}

const CHANNELS = ["Translate X", "Translate Y", "Translate Z", "Rotate X", "Rotate Y", "Rotate Z", "Scale X", "Scale Y", "Scale Z", "Visibility"];

function ChannelBox() {
  const side = "w-full whitespace-nowrap border-b border-[#363636] pr-[2px] [writing-mode:vertical-rl]";
  return (
    <div className="flex grow border-l-2 border-[#393939]">
      <div className="flex w-[175px] shrink-0 flex-col pl-[3px]">
        <div className="flex h-[16px] items-center justify-end gap-[4px] pr-[4px]">
          <svg className="h-[10px] w-[10px]" viewBox="0 0 10 10"><path d="M5 2v4l-3 2M5 6l3 2" stroke="#ccc" fill="none" /><circle cx="5" cy="2" r="1.500" fill="#7ac060" /><circle cx="2" cy="8" r="1.500" fill="#5a7fe0" /><circle cx="8" cy="8" r="1.500" fill="#e06050" /></svg>
          <svg className="h-[10px] w-[10px]" viewBox="0 0 10 10"><path d="M2.500 8.500a4 4 0 115 0" stroke="#50b5bb" fill="none" strokeWidth="2" /><path d="M5 5l2 4" stroke="#ddd" /></svg>
          <svg className="h-[10px] w-[10px]" viewBox="0 0 10 10"><path d="M1 1v8h8M2 8l6-6" stroke="#8fa5a5" fill="none" /><path d="M6 1h3v3z" fill={T} /></svg>
        </div>
        <div className="flex h-[13px] items-center pl-[5px] pt-px text-[7.400px]">
          <span className="w-[42px]">Channels</span><span className="w-[24px]">Edit</span><span className="w-[32px]">Object</span><span>Show</span>
        </div>
        <div className="mt-[1px] h-[12px] pl-[1px] text-[7.600px] font-semibold leading-[12px]">pSphere1</div>
        <div>
          {CHANNELS.map((c, i) => (
            <div key={c} className="flex h-[10.650px] items-center text-[7.200px] leading-[10px]">
              <span className="w-[115px] text-right">{c}</span>
              <span className="ml-[4.500px] h-full w-[5px] bg-[#cc2a34]" />
              <span className="h-full w-[44px] bg-[#2b2b2b] pl-[1px] text-[7.600px] text-[#ddd]">{i < 6 ? "0" : i < 9 ? "1" : "on"}</span>
            </div>
          ))}
        </div>
        <div className="h-[11px] pl-[1px] text-[7.400px] font-semibold leading-[12px]">SHAPES</div>
        <div className="h-[9px] w-[169px] bg-[#3b3b3b] pl-[7px] text-[7.700px] font-semibold leading-[10px]">pSphereShape1</div>
        <div className="ml-px mt-[11px] h-[324px] w-[169px] border border-[#393939] bg-[#2b2b2b]" />
        <Dots className="ml-[56px] mt-[1px] h-[3px] w-[57px]" />
      </div>
      <div className="flex w-[11px] flex-col items-center text-[7.400px] leading-[9px] text-[#a5a5a5]">
        <div className={`h-[107px] pt-[8px] text-[#d8d8d8] ${side}`}>Channel Box / Layer Editor</div>
        <div className={`h-[75px] bg-[#3d3d3d] pt-[8px] ${side}`}>Modeling Toolkit</div>
        <div className={`h-[69px] bg-[#3d3d3d] pt-[7px] ${side}`}>Attribute Editor</div>
      </div>
    </div>
  );
}

const PLAY = [
  <path d="M.7 1v10" />, <path d="M3 1v10" />, <path d="M2 0v12" stroke={O} />, null, null, <path d="M10.500 0v12" stroke={O} />, <path d="M10 1v10" />, <path d="M12.300 1v10" />,
];
const ARROWS = ["M7 2v8L2 6zM12 2v8L7 6z", "M10 1.500v9L4 6z", "M10 1.500v9L4 6z", "M10 .5v11L1.500 6z", "M2 .5v11L10.500 6z", "M2.500 1.500v9L9 6z", "M2.500 1.500v9L9 6z", "M1 2v8l5-4zM6 2v8l5-4z"];

function Timeline() {
  const frames = Array.from({ length: 24 }, (_, i) => (i + 1) * 5);
  return (
    <div className="flex h-[26px] border-t-2 border-[#393939] pt-[3px]">
      <Dots className="ml-[2px] h-[20px] w-[4px]" />
      <div className="relative ml-[2px] flex h-[19px] w-[1075px] bg-[#2b2b2b] pl-[42px]">
        {frames.map((f) => (
          <div key={f} className={`relative shrink-0 text-[7.200px] leading-[9px] text-[#8f8f8f] ${f === 120 ? "w-[13px]" : "w-[44.320px]"}`}>
            <div className={`absolute bottom-0 left-0 ${f === 15 || f === 30 ? "h-full w-[2px] bg-[#962a2a]" : "h-[10px] w-px bg-[#a0a0a0]"}`} />
            <span className="pl-[1.500px]">{f}</span>
          </div>
        ))}
        <div className="absolute left-[5px] top-0 h-full w-[9px] border-l border-[#a82828] bg-[#565656] pl-[2px] pt-[8px] text-[7.500px] leading-[11px] text-white">1</div>
      </div>
      <div className="ml-[5px] mt-[4px] h-[12px] w-[59px] bg-[#2b2b2b] pl-[4px] text-[7.600px] leading-[14px]">1</div>
      <div className="ml-[4px] mt-[2px] flex h-[14px] items-center">
        {ARROWS.map((a, i) => (
          <div key={i} className="flex w-[15.500px] justify-center">
            <svg className="h-[12px] w-[13px]" viewBox="0 0 13 12"><path d={a} fill="#d2d2d2" /><g stroke="#d2d2d2" strokeWidth="1.300">{PLAY[i]}</g></svg>
          </div>
        ))}
      </div>
    </div>
  );
}

function RangeRow() {
  const box = "flex h-[16px] items-center bg-[#2b2b2b] pl-[4px] pt-px shrink-0";
  return (
    <div className="flex h-[25px] items-center border-t border-[#393939] text-[7.400px]">
      <Dots className="ml-[2px] h-[20px] w-[4px]" />
      <div className={`ml-[3px] w-[59px] ${box}`}>1</div>
      <div className={`ml-[5px] w-[59px] ${box}`}>1</div>
      <div className="ml-[5px] flex h-[16px] w-[680px] shrink-0 items-center bg-[#373737] pl-[4px]">
        <div className="flex h-[13px] w-[408px] items-center justify-between rounded-sm bg-[#5d5d5d] px-[1px]">
          <div className="flex items-center"><div className="mr-[3px] h-[10px] w-[10px] rounded-[2px] bg-[#a0a0a0]" /><span className="pt-px">1</span></div>
          <div className="flex items-center"><span className="pt-px">120</span><div className="ml-[3px] h-[10px] w-[10px] rounded-[2px] bg-[#a0a0a0]" /></div>
        </div>
      </div>
      <div className={`ml-[4px] w-[58px] ${box}`}>120</div>
      <div className={`ml-[6px] w-[58px] ${box}`}>200</div>
      <Sep w="w-[8px]" />
      <svg className="mx-[7px] h-[4px] w-[5px]" viewBox="0 0 5 4"><path d="M.5.500h4l-2 3z" fill="none" stroke="#aaa" strokeWidth=".7" /></svg>
      <div className="h-[14px] w-[67px] whitespace-nowrap bg-[#3d3d3d] pl-[3px] leading-[15px]">No Character Set</div>
      <svg className="mx-[7px] h-[4px] w-[5px]" viewBox="0 0 5 4"><path d="M.5.500h4l-2 3z" fill="none" stroke="#aaa" strokeWidth=".7" /></svg>
      <div className="h-[14px] w-[68px] whitespace-nowrap bg-[#3d3d3d] pl-[4px] leading-[15px]">No Anim Layer</div>
      <Sep w="w-[15px]" />
      <div className="flex h-[13px] w-[64px] items-center bg-[#5a5a5a] pl-[3px] pt-px"><span className="w-[50px]">24 fps</span><Tri color="border-t-[#ccc]" /></div>
      <svg className="ml-[9px] h-[10px] w-[12px]" viewBox="0 0 12 10"><path d="M1 5c0-3 2-3 7-3M11 5c0 3-2 3-7 3" stroke="#ccc" fill="none" strokeWidth="1.400" /><path d="M8 0l3 2-3 2.200zM4 5.800v4.200L1 8z" fill="#ccc" /></svg>
      <Sep w="w-[15px]" />
      <div className="flex h-[15px] w-[16px] items-center justify-center bg-[#c8283c]">
        <svg className="h-[12px] w-[12px]" viewBox="0 0 12 12"><circle cx="6" cy="6" r="5" fill="none" stroke="#e8a070" strokeWidth="1.100" strokeDasharray="6 1.500" /><path d="M6 2v7M4 4v3M8 4v3" stroke="#e8a070" strokeWidth=".9" /></svg>
      </div>
      <svg className="ml-[5px] h-[13px] w-[13px]" viewBox="0 0 13 13"><circle cx="3" cy="3" r="2" fill="none" stroke="#ccc" /><path d="M9 4L7 8l3 1v3M7 8l-2 3H3M5 5l3-.5 3 3h2" stroke={O} fill="none" strokeWidth="1.600" /><circle cx="10" cy="2.800" r="1.400" fill={O} /></svg>
    </div>
  );
}

function Taskbar() {
  const line = "h-[2px] w-[26px] bg-[#6fb4e8]";
  return (
    <div className="flex h-[27px] bg-[#1b1b1b]">
      <div className="flex w-8 items-center justify-center">
        <svg className="h-[12px] w-[12px]" viewBox="0 0 12 12"><path d="M0 1.700l5-.8v4.800H0zM5.700.8L12 0v5.700H5.700zM0 6.300h5V11l-5-.7zM5.700 6.300H12V12l-6.300-.9z" fill="#fff" /></svg>
      </div>
      <div className="flex w-[229px] items-center bg-[#f2f2f2] text-[9.400px] text-[#3c3c3c]">
        <svg className="ml-[7px] mr-[8px] h-[12px] w-[12px]" viewBox="0 0 12 12"><circle cx="7.300" cy="4.700" r="3.800" fill="none" stroke="#333" strokeWidth="1.100" /><path d="M4.600 7.500L.8 11.300" stroke="#333" strokeWidth="1.100" /></svg>
        <span className="pt-px">Type here to search</span>
      </div>
      <div className="flex w-[32px] items-center justify-center">
        <svg className="h-[12px] w-[12px]" viewBox="0 0 12 12"><path d="M.5.500v2h7v-2M.5 11.500v-2h7v2M.5 4h7v4h-7zM10 .5v11M9 3.500h2.500" stroke="#ddd" fill="none" /></svg>
      </div>
      <div className="ml-[5px] flex w-[26px] flex-col items-center justify-between">
        <svg className="mt-[6px] h-[15px] w-[16px]" viewBox="0 0 16 15"><path d="M1 1h6l1.500 2H15v11H1z" fill="#f2c24c" /><path d="M1 5h14v9H1z" fill="#fbd978" /><path d="M3.500 8h9v6h-2v-3h-5v3h-2z" fill="#3d8fd0" /></svg>
        <div className={line} />
      </div>
      <div className="ml-[7px] flex w-[26px] items-center justify-center bg-[#a3161b]">
        <svg className="h-[15px] w-[15px]" viewBox="0 0 15 15"><circle cx="7.500" cy="7.500" r="6" fill="none" stroke="#c81c24" strokeWidth="2.800" /><path d="M7.500 1.500a6 6 0 015 9" stroke="#f03a40" fill="none" strokeWidth="2.800" /></svg>
      </div>
      <div className="ml-[4px] flex w-[29px] flex-col items-center justify-between bg-[#4a4a4a]">
        <div className="mt-[5px] flex h-[16px] w-[16px] items-center justify-center bg-[#f2f7f7]"><MayaM className="h-[11px] w-[12px]" /></div>
        <div className="h-[2px] w-[29px] bg-[#6fb4e8]" />
      </div>
      <div className="ml-[6px] flex w-[26px] flex-col items-center justify-between">
        <div className="mt-[5px] flex h-[16px] w-[16px] items-center justify-center rounded-[5px] bg-[#4a8cf7]">
          <svg className="h-[6px] w-[11px]" viewBox="0 0 11 6"><rect width="7" height="6" rx="1.500" fill="#fff" /><path d="M7.500 2.500L10.500.500v5l-3-2z" fill="#fff" /></svg>
        </div>
        <div className={line} />
      </div>
      <div className="ml-[6px] flex w-[26px] flex-col items-center justify-between">
        <svg className="mt-[6px] h-[14px] w-[12px]" viewBox="0 0 12 14"><path d="M0 0h12v14H0z" fill="#d8e4ee" /><path d="M0 0h12v4H0z" fill="#6c8fc8" /><path d="M3.500 11l2-5 2 5" stroke="#e08a50" fill="none" /><path d="M8 7h3M8 9h3" stroke="#89a" /></svg>
        <div className={line} />
      </div>
      <div className="ml-auto flex">
        <div className="relative mr-[9px] mt-px h-[26px] w-[159px]">
          <div className="flex h-[21px] items-center justify-center whitespace-pre bg-black font-['Inter'] text-[14.200px] font-semibold text-white">2021-05-02  14:17:24</div>
          <span className="absolute left-[98px] top-[2px] text-[7.500px] leading-[8px] text-white/30">2:17 pm</span>
          <span className="absolute left-[92px] top-[15px] text-[7.200px] leading-[9px] text-white/50">02/05/2021</span>
        </div>
        <div className="mr-px w-px bg-[#555]" />
      </div>
    </div>
  );
}

export default function App() {
  return (
    <div className="relative flex h-[720px] w-[1280px] flex-col overflow-hidden bg-[#444] font-['Open_Sans',sans-serif] text-[#cdcdcd] [text-rendering:geometricPrecision]">
      <div className="flex h-[15px] shrink-0 items-center bg-white text-[7.600px] text-[#222]">
        <MayaM className="ml-[2px] mr-[4px] h-[9px] w-[9px]" />
        <span className="whitespace-pre pt-[2px]">Autodesk Maya 2018: untitled*   ---   pSphere1...</span>
        <svg className="ml-auto mr-[11px] h-[8px] w-[70px]" viewBox="0 0 70 8"><path d="M0 4.500h7M30.500 2.500h4.500V7h-4.500zM32 2.500V1h5v4.500h-2M61.500 1l6 6M67.500 1l-6 6" stroke="#333" fill="none" strokeWidth=".9" /></svg>
      </div>
      <div className="flex h-[16px] shrink-0 pl-[6px] text-[7.400px] leading-[16px]">
        {MENUS.map(([m, w]) => <span key={m} className={`${w} shrink-0 whitespace-nowrap`}>{m}</span>)}
        <div className="ml-auto flex items-center pt-[2px] leading-[12px]">
          <span className="mr-[4px] pt-[2px]">Workspace :</span>
          <div className="flex h-[13px] w-[127px] items-center justify-between bg-[#555] pl-[2px] pr-[2px] pt-[2px]">Maya Classic*<Tri color="border-t-[#ccc]" /></div>
          <svg className="ml-[3px] mr-[2px] h-[15px] w-[15px]" viewBox="0 0 15 15"><path d="M3 .5H.5v14H3M12 .5h2.500v14H12" stroke="#35b435" fill="none" /><path d="M4 7h7v5.500H4z" fill="#ccc" /><path d="M5.500 7V5c0-2.500 4-2.500 4 0v2" stroke="#ccc" fill="none" strokeWidth="1.200" /></svg>
        </div>
      </div>
      <StatusLine />
      <Shelf />
      <div className="flex h-[507px] shrink-0">
        <ToolBox />
        <Outliner />
        <div className="ml-[2px] grid w-[800px] shrink-0 grid-cols-[401px_399px] content-start gap-y-[1px] pt-[2px]">
          <Viewport name="top -Y" /><Viewport name="persp" active />
          <Viewport name="front -Z" /><Viewport name="side -X" />
        </div>
        <ChannelBox />
      </div>
      <Timeline />
      <RangeRow />
      <div className="flex h-[20px] shrink-0 items-center border-t border-[#393939] pt-[2px] text-[7.500px]">
        <Dots className="ml-[2px] h-[16px] w-[3px]" />
        <span className="ml-[11px] w-[24px] pt-px">MEL</span>
        <div className="h-[15px] w-[442px] bg-[#2b2b2b]" />
        <Dots className="mx-[1px] h-[10px] w-[3px]" />
        <div className="h-[15px] w-[771px] bg-[#2b2b2b]" />
        <svg className="ml-[4px] h-[13px] w-[12px]" viewBox="0 0 12 13"><path d="M0 .5h12v12H0z" fill="#d0d0d0" /><path d="M0 3h12" stroke="#555" /><path d="M4 5H3v2.500L2 8l1 .5V11h1M8 5h1v2.500l1 .5-1 .5V11H8M6 6v1M6 9v1" stroke="#333" fill="none" strokeWidth=".8" /></svg>
      </div>
      <div className="flex h-[17px] shrink-0 items-center border-t border-[#393939] pl-[103px] pt-[3px] text-[6.320px] text-[#c6c6c6]">
        <span className="whitespace-nowrap">to scale object(s). Shift+drag manipulator axis or plane handles to extrude components or clone objects. Ctrl+Shift+LMB+drag to constrain scaling to connected edges. Use D or INSERT to change the pivot position and axis orientation.</span>
      </div>
      <Taskbar />
      <div className="absolute left-[5px] top-[675px] flex h-[18px] w-[97px] items-center bg-white pl-[6px]">
        <MayaM className="h-[8px] w-[9px]" />
        <svg className="ml-[2px] h-[8px] w-[70px]" viewBox="0 0 70 8"><path d="M.5 2.500H5V7H.5zM2 2.500V1h5v4.500H5M30.500.500h6v6.500h-6zM61 1l6 6M67 1l-6 6" stroke="#777" fill="none" strokeWidth=".8" /></svg>
      </div>
    </div>
  );
}
